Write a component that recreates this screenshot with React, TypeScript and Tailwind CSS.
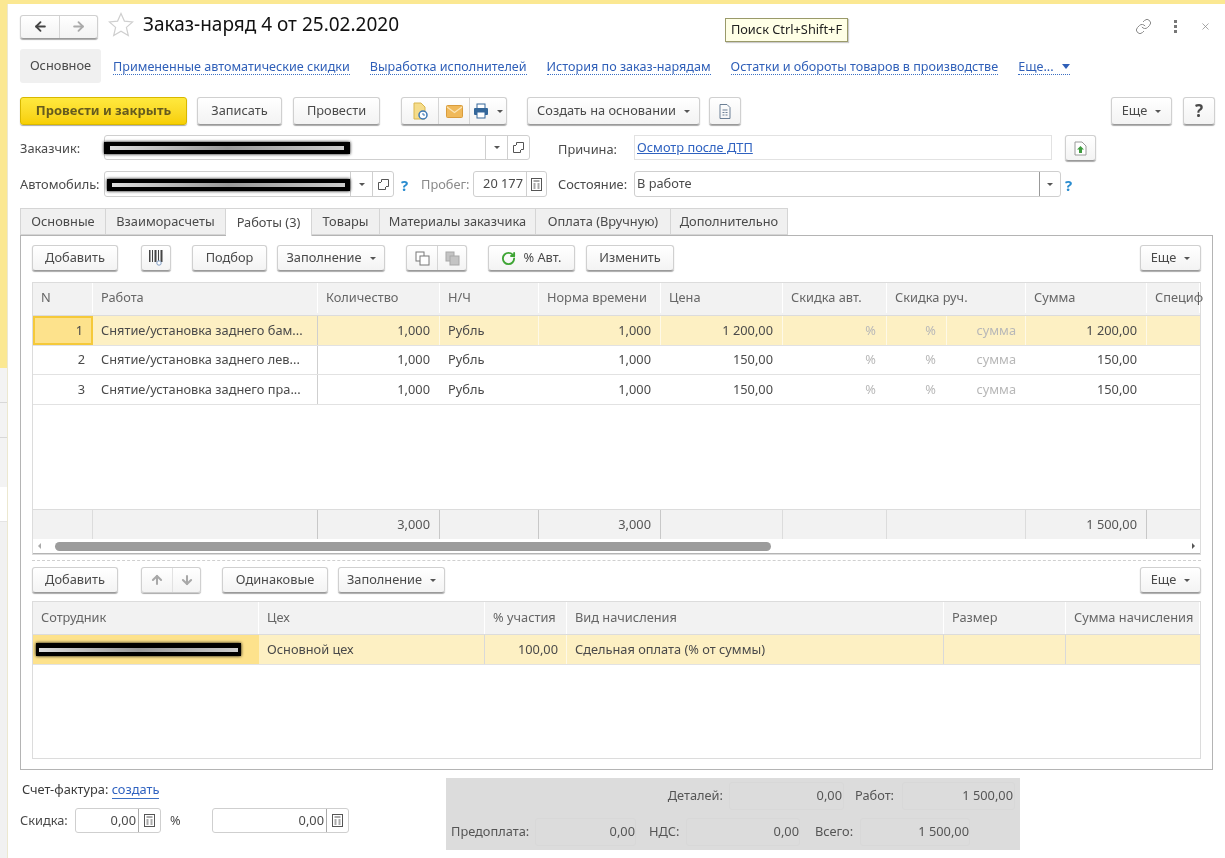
import { RotateCw, ArrowUp, ArrowDown, ArrowLeft, ArrowRight, Link, X } from "lucide-react";

function Caret() {
  return <span className="ml-2 inline-block h-0 w-0 border-x-[3px] border-t-[3px] border-x-transparent border-t-[#555]" />;
}

function Btn({ children, className = "" }: { children: React.ReactNode; className?: string }) {
  return (
    <div className={`flex h-[26px] shrink-0 items-center justify-center rounded-[3px] border border-[#d0d0d0] border-b-[#9a9a9a] bg-gradient-to-b from-white to-[#f3f3f3] text-[#4a4a4a] shadow-[0_1px_1px_#aaa] ${className}`}>
      {children}
    </div>
  );
}

function CalcIcon() {
  return (
    <svg width="11" height="13" viewBox="0 0 11 13" fill="none" stroke="#555" strokeWidth="1">
      <rect x="0.5" y="0.5" width="10" height="12" />
      <path d="M2.5 3h6M2.5 6h2M6.5 6h2M2.5 8h2M6.5 8h2M2.5 10h2M6.5 10h2" />
    </svg>
  );
}

function DocIcon() {
  return (
    <svg width="16" height="18" viewBox="0 0 16 18">
      <path d="M2 1h7l4 4v12H2z" fill="#f5dc8a" stroke="#d9b64e" />
      <circle cx="11" cy="13" r="4" fill="#fff" stroke="#3c78b5" strokeWidth="1.5" />
      <path d="M11 11v2h2" stroke="#3c78b5" fill="none" />
    </svg>
  );
}

function MailIcon() {
  return (
    <svg width="17" height="13" viewBox="0 0 17 13">
      <rect x="0.5" y="0.5" width="16" height="12" rx="1" fill="#f0b95a" stroke="#d99c3c" />
      <path d="M1 2l7.5 5.5L16 2" fill="none" stroke="#fbe6b8" strokeWidth="1.2" />
    </svg>
  );
}

function PrintIcon() {
  return (
    <svg width="16" height="16" viewBox="0 0 16 16">
      <rect x="4" y="1" width="8" height="5" fill="#fff" stroke="#34679a" />
      <rect x="1" y="5" width="14" height="7" rx="1" fill="#34679a" />
      <rect x="4" y="9" width="8" height="6" fill="#fff" stroke="#34679a" />
    </svg>
  );
}

function BarcodeIcon() {
  return (
    <svg width="15" height="17" viewBox="0 0 15 17" fill="#444">
      <path d="M0 0h1.5v12H0zM3 0h1v12H3zM5.5 0h2v12h-2zM9 0h1v12H9zM11.5 0h2v12h-2z" />
      <circle cx="10" cy="13" r="2.2" fill="#fff" stroke="#7f9dc4" />
    </svg>
  );
}

function CopyIcon({ muted }: { muted?: boolean }) {
  const stroke = muted ? "#a8a8a8" : "#777";
  const fill = muted ? "#c4c4c4" : "#fff";
  return (
    <svg width="15" height="15" viewBox="0 0 15 15" fill={fill} stroke={stroke}>
      <rect x="1" y="1" width="8" height="9" />
      <rect x="5" y="5" width="9" height="9" />
    </svg>
  );
}

function ReasonIcon() {
  return (
    <svg width="15" height="15" viewBox="0 0 15 15">
      <path d="M2 1h7l4 4v9H2z" fill="#fff" stroke="#9a9a9a" />
      <path d="M7.5 5l3.5 3.5H9V12H6V8.5H4z" fill="#3f9b3f" />
    </svg>
  );
}

function FormIcon() {
  return (
    <svg width="12" height="15" viewBox="0 0 12 15" fill="none" stroke="#6b7f95">
      <path d="M1 .5h7l3 3v11H1z" />
      <path d="M3.5 6h5M3.5 8.5h2M6.5 8.5h2M3.5 11h2M6.5 11h2" />
    </svg>
  );
}

function OpenIcon() {
  return (
    <svg width="11" height="11" viewBox="0 0 11 11" fill="none" stroke="#555">
      <path d="M3.5 3V.5h7v7H8" />
      <path d="M3 3.5H.5v7h7V8" />
    </svg>
  );
}

function Redacted({ className = "" }: { className?: string }) {
  return (
    <div className={`absolute flex items-center bg-black shadow-[0_0_3px_#000] ${className}`}>
      <div className="h-[4px] w-full bg-gradient-to-r from-[#ddd] via-[#999] to-[#ccc]" />
    </div>
  );
}

const cols = [
  { w: 60, label: "N" },
  { w: 225, label: "Работа" },
  { w: 122, label: "Количество" },
  { w: 99, label: "Н/Ч" },
  { w: 122, label: "Норма времени" },
  { w: 122, label: "Цена" },
  { w: 104, label: "Скидка авт." },
  { w: 139, label: "Скидка руч." },
  { w: 121, label: "Сумма" },
  { w: 53, label: "Специф" },
];

const rows = [
  { n: "1", work: "Снятие/установка заднего бам...", price: "1 200,00", sum: "1 200,00" },
  { n: "2", work: "Снятие/установка заднего лев...", price: "150,00", sum: "150,00" },
  { n: "3", work: "Снятие/установка заднего пра...", price: "150,00", sum: "150,00" },
];

function WorkRow({ row, active }: { row: (typeof rows)[number]; active: boolean }) {
  const cell = `flex shrink-0 items-center border-r ${active ? "border-white/60" : "border-transparent"}`;
  return (
    <div className={`flex h-[29.5px] border-b border-[#e2e2e2] text-[#4a4a4a] ${active ? "bg-[#fdf0c3]" : "bg-white"}`}>
      <div className={`flex w-[60px] shrink-0 items-center justify-end pr-2 ${active ? "border-2 border-[#f5c93a] bg-[#fde28c]" : ""}`}>{row.n}</div>
      <div className="flex w-[225px] shrink-0 items-center border-r border-[#cfcfcf] pl-2">{row.work}</div>
      <div className={`${cell} w-[122px] justify-end pr-[9px]`}>1,000</div>
      <div className={`${cell} w-[99px] pl-2`}>Рубль</div>
      <div className={`${cell} w-[122px] justify-end pr-[9px]`}>1,000</div>
      <div className={`${cell} w-[122px] justify-end pr-[9px]`}>{row.price}</div>
      <div className={`${cell} w-[104px] justify-end pr-[10px] text-[#b8b8b8]`}>%</div>
      <div className={`${cell} w-[60px] justify-end pr-[10px] text-[#b8b8b8]`}>%</div>
      <div className={`${cell} w-[79px] justify-end pr-[9px] text-[#b8b8b8]`}>сумма</div>
      <div className={`${cell} w-[121px] justify-end pr-[9px]`}>{row.sum}</div>
      <div className="flex-1" />
    </div>
  );
}

const cols2 = [
  { w: 226, label: "Сотрудник" },
  { w: 226, label: "Цех" },
  { w: 82, label: "% участия" },
  { w: 377, label: "Вид начисления" },
  { w: 122, label: "Размер" },
  { w: 134, label: "Сумма начисления" },
];

const tabs = [
  { w: 86, label: "Основные" },
  { w: 120, label: "Взаиморасчеты" },
  { w: 86, label: "Работы (3)", active: true },
  { w: 68, label: "Товары" },
  { w: 156, label: "Материалы заказчика" },
  { w: 135, label: "Оплата (Вручную)" },
  { w: 117, label: "Дополнительно" },
];

const link = "ml-[20px] mt-[10px] border-b border-dotted border-[#3b6fc4] text-[12.6px] leading-[15px] text-[#2f5fb8]";

export default function App() {
  return (
    <div className="flex h-[858px] w-[1225px] flex-col overflow-hidden bg-white text-[12.8px] text-[#4a4a4a] blur-[0.4px] [font-family:'Liberation_Sans',Arial,sans-serif]">
      <div className="h-[4px] shrink-0 bg-[#fbe892]" />
      <div className="flex min-h-0 flex-1">
        <div className="flex w-[8px] shrink-0 flex-col border-r border-[#ece8d0]">
          <div className="h-[364px] bg-[#fbe892]" />
          <div className="h-[34px] bg-[#f3f3f3]" />
          <div className="h-[35px] border-t border-[#d8d8d8] bg-[#f3f3f3]" />
          <div className="h-[50px] border-t border-[#d8d8d8] bg-[#f3f3f3]" />
          <div className="h-[34px] bg-white" />
          <div className="flex-1 border-t border-[#e4e4e4] bg-[#f1f1f1]" />
        </div>
        <div className="relative flex min-w-0 flex-1 flex-col pl-[12px] pr-[8px]">
          {/* title */}
          <div className="flex h-[45px] shrink-0 items-center">
            <div className="flex h-[24px] w-[78px] items-center rounded-[3px] border border-[#d0d0d0] border-b-[#9a9a9a] bg-gradient-to-b from-white to-[#f3f3f3] shadow-[0_1px_1px_#aaa]">
              <div className="flex h-full w-[39px] items-center justify-center border-r border-[#d5d5d5]"><ArrowLeft size={15} strokeWidth={3} className="text-[#444]" /></div>
              <div className="flex h-full flex-1 items-center justify-center"><ArrowRight size={15} strokeWidth={3} className="text-[#aaa]" /></div>
            </div>
            <svg className="mb-[4px] ml-[10px]" width="26" height="25" viewBox="0 0 26 25" fill="none" stroke="#cfcfcf" strokeWidth="1.2">
              <path d="M13 1.5l3.4 7.6 8.2.8-6.2 5.5 1.9 8.1-7.3-4.3-7.3 4.3 1.9-8.1L1.4 9.9l8.2-.8z" />
            </svg>
            <div className="mb-[4px] ml-[9px] text-[19px] leading-none text-[#111]">Заказ-наряд 4 от 25.02.2020</div>
            <div className="ml-auto flex items-center text-[#888]">
              <Link size={17} strokeWidth={1.4} />
              <div className="ml-[22px] flex flex-col gap-[2px]">
                <div className="h-[3px] w-[3px] bg-[#777]" />
                <div className="h-[3px] w-[3px] bg-[#777]" />
                <div className="h-[3px] w-[3px] bg-[#777]" />
              </div>
              <X size={11} strokeWidth={1.6} className="ml-[23px] mr-[6px]" />
            </div>
          </div>

          {/* form sections */}
          <div className="flex h-[48px] shrink-0 items-start">
            <div className="flex h-[34px] w-[81px] items-center justify-center rounded-[3px] bg-[#f0f0f0]">Основное</div>
            <a className={`${link} !ml-[12px]`}>Примененные автоматические скидки</a>
            <a className={link}>Выработка исполнителей</a>
            <a className={link}>История по заказ-нарядам</a>
            <a className={link}>Остатки и обороты товаров в производстве</a>
            <a className={`${link} flex items-center`}>
              Еще...
              <span className="ml-[8px] inline-block h-0 w-0 border-x-[4px] border-t-[5px] border-x-transparent border-t-[#2f5fb8]" />
            </a>
          </div>

          {/* command bar */}
          <div className="flex h-[38px] shrink-0 items-start">
            <Btn className="!h-[28px] w-[167px] !border-[#d8b800] !from-[#ffe93d] !to-[#f7cf00] text-[13px] font-bold !text-[#655b1e]">Провести и закрыть</Btn>
            <Btn className="ml-[10px] !h-[28px] w-[85px]">Записать</Btn>
            <Btn className="ml-[11px] !h-[28px] w-[87px]">Провести</Btn>
            <Btn className="ml-[21px] !h-[28px] w-[106px] !justify-start">
              <div className="flex h-full w-[37px] items-center justify-center border-r border-[#d5d5d5]"><DocIcon /></div>
              <div className="flex h-full w-[31px] items-center justify-center border-r border-[#d5d5d5]"><MailIcon /></div>
              <div className="flex h-full flex-1 items-center justify-center"><PrintIcon /><Caret /></div>
            </Btn>
            <Btn className="ml-[20px] !h-[28px] w-[173px]">Создать на основании<Caret /></Btn>
            <Btn className="ml-[9px] !h-[28px] w-[32px]"><FormIcon /></Btn>
            <Btn className="ml-auto !h-[28px] w-[61px]">Еще<Caret /></Btn>
            <Btn className="ml-[11px] mr-[2px] !h-[28px] w-[32px] text-[17px] font-bold">?</Btn>
          </div>

          {/* customer row */}
          <div className="flex h-[36px] shrink-0 items-start">
            <div className="relative flex w-[84px] pt-[4px]">Заказчик:</div>
            <div className="relative flex h-[25px] w-[426px] items-center justify-end rounded-[3px] border border-[#cfcfcf] bg-white">
              <Redacted className="left-[-1px] top-[6px] h-[12px] w-[246px] px-[6px]" />
              <div className="flex h-full w-[22px] items-center justify-center border-l border-[#cfcfcf]"><span className="inline-block h-0 w-0 border-x-[3px] border-t-[3px] border-x-transparent border-t-[#555]" /></div>
              <div className="flex h-full w-[22px] items-center justify-center border-l border-[#cfcfcf]"><OpenIcon /></div>
            </div>
            <div className="ml-[28px] w-[76px] pt-[5px]">Причина:</div>
            <div className="flex h-[25px] w-[418px] items-center border border-[#e2e2e2] pl-[2px] text-[#2f62c0] underline">Осмотр после ДТП</div>
            <Btn className="ml-[13px] w-[31px]"><ReasonIcon /></Btn>
          </div>

          {/* car row */}
          <div className="flex h-[37px] shrink-0 items-start">
            <div className="w-[84px] pt-[4px]">Автомобиль:</div>
            <div className="relative flex h-[26px] w-[290px] items-center justify-end rounded-[3px] border border-[#cfcfcf] bg-white">
              <Redacted className="left-[2px] top-[7px] h-[12px] w-[243px] px-[5px]" />
              <div className="flex h-full w-[22px] items-center justify-center border-l border-[#cfcfcf]"><span className="inline-block h-0 w-0 border-x-[3px] border-t-[3px] border-x-transparent border-t-[#555]" /></div>
              <div className="flex h-full w-[21px] items-center justify-center border-l border-[#cfcfcf]"><OpenIcon /></div>
            </div>
            <div className="ml-[7px] w-[20px] pt-[3px] text-[15px] font-bold text-[#2a8ccf]">?</div>
            <div className="w-[52px] pt-[4px] text-[#8a8a8a]">Пробег:</div>
            <div className="flex h-[26px] w-[74px] items-center rounded-[3px] border border-[#cfcfcf]">
              <div className="flex-1 pr-[3px] text-right">20 177</div>
              <div className="flex h-full w-[20px] items-center justify-center border-l border-[#cfcfcf]"><CalcIcon /></div>
            </div>
            <div className="ml-[11px] w-[76px] pt-[4px]">Состояние:</div>
            <div className="flex h-[26px] w-[427px] items-center justify-between rounded-[3px] border border-[#cfcfcf] pl-[2px]">
              В работе
              <div className="flex h-full w-[21px] items-center justify-center border-l border-[#999]"><span className="inline-block h-0 w-0 border-x-[3px] border-t-[3px] border-x-transparent border-t-[#555]" /></div>
            </div>
            <div className="ml-[4px] pt-[3px] text-[15px] font-bold text-[#2a8ccf]">?</div>
          </div>

          {/* tabs */}
          <div className="relative z-10 flex h-[27px] shrink-0">
            {tabs.map((t) => (
              <div
                key={t.label}
                style={{ width: t.w }}
                className={`flex items-center justify-center border border-l-0 first:border-l border-[#d5d5d5] ${t.active ? "h-[28px] border-b-0 bg-white" : "h-[27px] bg-[#f0f0f0]"}`}
              >
                {t.label}
              </div>
            ))}
          </div>

          {/* tab panel */}
          <div className="flex h-[535px] w-[1193px] shrink-0 flex-col border border-[#b4b4b4] px-[11px] pt-[9px]">
            <div className="flex h-[37px] shrink-0 items-start">
              <Btn className="w-[86px]">Добавить</Btn>
              <Btn className="ml-[23px] w-[30px]"><BarcodeIcon /></Btn>
              <Btn className="ml-[21px] w-[75px]">Подбор</Btn>
              <Btn className="ml-[10px] w-[108px]">Заполнение<Caret /></Btn>
              <Btn className="ml-[21px] w-[61px] !justify-start">
                <div className="flex h-full w-[31px] items-center justify-center border-r border-[#d5d5d5]"><CopyIcon /></div>
                <div className="flex h-full flex-1 items-center justify-center"><CopyIcon muted /></div>
              </Btn>
              <Btn className="ml-[21px] w-[87px]"><RotateCw size={15} strokeWidth={3} className="mr-[7px] text-[#3fa535]" />% Авт.</Btn>
              <Btn className="ml-[11px] w-[88px]">Изменить</Btn>
              <Btn className="ml-auto w-[61px]">Еще<Caret /></Btn>
            </div>

            {/* works table */}
            <div className="flex h-[273px] shrink-0 flex-col border border-[#dcdcdc]">
              <div className="flex h-[33px] shrink-0 border-b border-[#dcdcdc] bg-[#f2f2f2] pb-[2px] text-[#666]">
                {cols.map((c) => (
                  <div key={c.label} style={{ width: c.w }} className="flex shrink-0 items-center whitespace-nowrap border-r border-white pl-2">
                    {c.label}
                  </div>
                ))}
              </div>
              {rows.map((r, i) => (
                <WorkRow key={r.n} row={r} active={i === 0} />
              ))}
              <div className="flex-1" />
              <div className="flex h-[30px] shrink-0 border-t border-[#dcdcdc] bg-[#f2f2f2] text-[#555]">
                <div className="w-[60px] shrink-0 border-r border-[#dcdcdc]" />
                <div className="w-[225px] shrink-0 border-r border-[#c8c8c8]" />
                <div className="flex w-[122px] shrink-0 items-center justify-end border-r border-[#c8c8c8] pr-[9px]">3,000</div>
                <div className="w-[99px] shrink-0 border-r border-[#c8c8c8]" />
                <div className="flex w-[122px] shrink-0 items-center justify-end border-r border-[#c8c8c8] pr-[9px]">3,000</div>
                <div className="w-[122px] shrink-0 border-r border-[#dcdcdc]" />
                <div className="w-[104px] shrink-0 border-r border-[#dcdcdc]" />
                <div className="w-[139px] shrink-0 border-r border-[#dcdcdc]" />
                <div className="flex w-[121px] shrink-0 items-center justify-end border-r border-[#c8c8c8] pr-[9px]">1 500,00</div>
              </div>
              <div className="flex h-[15px] shrink-0 items-center border-b border-[#b4b4b4] px-[5px]">
                <span className="h-0 w-0 border-y-[3px] border-r-[3px] border-y-transparent border-r-[#aaa]" />
                <div className="ml-[14px] h-[9px] w-[716px] rounded-full bg-[#9c9c9c]" />
                <span className="ml-auto h-0 w-0 border-y-[3px] border-l-[3px] border-y-transparent border-l-[#555]" />
              </div>
            </div>

            <div className="mt-[5px] h-0 shrink-0 border-t border-dashed border-[#d0d0d0]" />

            <div className="flex h-[40px] shrink-0 items-start pt-[6px]">
              <Btn className="w-[86px]">Добавить</Btn>
              <Btn className="ml-[23px] w-[60px] !justify-start !border-b-[#ccc]">
                <div className="flex h-full w-[31px] items-center justify-center border-r border-[#e2e2e2]"><ArrowUp size={14} strokeWidth={3.5} className="text-[#a8a8a8]" /></div>
                <div className="flex h-full flex-1 items-center justify-center"><ArrowDown size={14} strokeWidth={3.5} className="text-[#a8a8a8]" /></div>
              </Btn>
              <Btn className="ml-[21px] w-[106px]">Одинаковые</Btn>
              <Btn className="ml-[10px] w-[107px]">Заполнение<Caret /></Btn>
              <Btn className="ml-auto w-[61px]">Еще<Caret /></Btn>
            </div>

            {/* staff table */}
            <div className="flex h-[158px] shrink-0 flex-col border border-[#dcdcdc]">
              <div className="flex h-[33px] shrink-0 border-b border-[#dcdcdc] bg-[#f2f2f2] text-[#666]">
                {cols2.map((c) => (
                  <div key={c.label} style={{ width: c.w }} className="flex shrink-0 items-center overflow-hidden whitespace-nowrap border-r border-white pl-2">
                    {c.label}
                  </div>
                ))}
              </div>
              <div className="flex h-[30px] shrink-0 border-b border-[#e2e2e2] bg-[#fdf0c3] text-[#4a4a4a]">
                <div className="relative w-[226px] shrink-0 bg-[#fde28c]">
                  <Redacted className="left-[3px] top-[8px] h-[13px] w-[205px] px-[3px]" />
                </div>
                <div className="flex w-[226px] shrink-0 items-center border-r border-[#d9d9d9] pl-2">Основной цех</div>
                <div className="flex w-[82px] shrink-0 items-center justify-end border-r border-white/60 pr-2">100,00</div>
                <div className="flex w-[377px] shrink-0 items-center border-r border-[#d9d9d9] pl-2">Сдельная оплата (% от суммы)</div>
                <div className="w-[122px] shrink-0 border-r border-[#d9d9d9]" />
              </div>
            </div>
          </div>

          {/* footer */}
          <div className="flex min-h-0 flex-1 pt-[8px]">
            <div className="w-[426px] shrink-0">
              <div className="pl-[2px] pt-[4px] leading-[15px]">
                <span className="text-[#3a3a3a]">Счет-фактура:</span> <span className="border-b border-[#3b6fc4] text-[#2f62c0]">создать</span>
              </div>
              <div className="mt-[11px] flex items-center">
                <div className="w-[55px]">Скидка:</div>
                <div className="flex h-[25px] w-[86px] items-center rounded-[3px] border border-[#cfcfcf]">
                  <div className="flex-1 pr-[2px] text-right">0,00</div>
                  <div className="flex h-full w-[22px] items-center justify-center border-l border-[#aaa]"><CalcIcon /></div>
                </div>
                <div className="ml-[9px] w-[42px]">%</div>
                <div className="flex h-[25px] w-[137px] items-center rounded-[3px] border border-[#cfcfcf]">
                  <div className="flex-1 pr-[2px] text-right">0,00</div>
                  <div className="flex h-full w-[22px] items-center justify-center border-l border-[#aaa]"><CalcIcon /></div>
                </div>
              </div>
            </div>
            <div className="flex h-[72px] w-[574px] shrink-0 flex-col gap-[8px] bg-[#dcdcdc] pt-[4px] text-[#555]">
              <div className="flex h-[28px] items-center">
                <div className="ml-[221px] w-[56px] text-right">Деталей:</div>
                <div className="ml-[6px] flex h-full w-[115px] items-center justify-end rounded-[3px] border border-[#d8d8d8] pr-[1px]">0,00</div>
                <div className="ml-[11px] w-[46px]">Работ:</div>
                <div className="ml-[1px] flex h-full w-[113px] items-center justify-end rounded-[3px] border border-[#d8d8d8] pr-[1px]">1 500,00</div>
              </div>
              <div className="flex h-[28px] items-center">
                <div className="ml-[5px] w-[83px]">Предоплата:</div>
                <div className="ml-[1px] flex h-full w-[101px] items-center justify-end rounded-[3px] border border-[#d8d8d8]">0,00</div>
                <div className="ml-[13px] w-[37px]">НДС:</div>
                <div className="flex h-full w-[114px] items-center justify-end rounded-[3px] border border-[#d8d8d8]">0,00</div>
                <div className="ml-[15px] w-[45px]">Всего:</div>
                <div className="flex h-full w-[110px] items-center justify-end rounded-[3px] border border-[#d8d8d8]">1 500,00</div>
              </div>
            </div>
          </div>

          {/* tooltip */}
          <div className="absolute left-[717px] top-[14px] flex h-[24px] w-[123px] items-center justify-center border border-[#9a9a6a] bg-[#ffffe6] text-[#222] shadow-[1px_1px_1px_#ccc]">
            Поиск Ctrl+Shift+F
          </div>
        </div>
      </div>
    </div>
  );
}
